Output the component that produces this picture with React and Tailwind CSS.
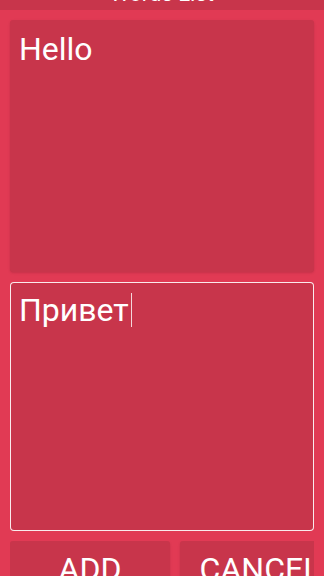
import React from "react";

const font = { fontFamily: "Roboto, 'Noto Sans', sans-serif" };

const App = () => {
  return (
    <div
      className="w-[324px] h-[576px] bg-[#e13a54] overflow-hidden flex flex-col text-white"
      style={font}
    >
      {/* Title bar, scrolled mostly off screen */}
      <div className="h-[10px] shrink-0 bg-[#c8354b] overflow-hidden flex items-end justify-center">
        <span className="text-[22px] leading-[22px] mb-[5px]">Words List</span>
      </div>

      <div className="flex flex-col gap-[10px] px-[10px] pt-[10px]">
        {/* Source word */}
        <div className="h-[252px] bg-[#c8354b] rounded-[3px] shadow-sm px-[9px] pt-[10px]">
          <p className="text-[32px] leading-[38px]">Hello</p>
        </div>

        {/* Translation input */}
        <div className="h-[249px] bg-[#c8354b] rounded-[4px] border-[1.5px] border-white/90 px-[8px] pt-[8px]">
          <p className="text-[32px] leading-[38px] flex items-center">
            Привет
            <span className="inline-block w-[1px] h-[34px] bg-white/80 ml-[2px]" />
          </p>
        </div>

        {/* Buttons */}
        <div className="w-[304px] overflow-hidden">
          <div className="flex gap-[10px] w-[340px]">
            <button className="w-[160px] h-[48px] shrink-0 bg-[#c8354b] rounded-[3px] shadow-sm text-[32px] leading-[36px] pt-[10px] flex justify-center items-start">
              ADD
            </button>
            <button className="w-[160px] h-[48px] shrink-0 bg-[#c8354b] rounded-[3px] shadow-sm text-[32px] leading-[36px] pt-[10px] flex justify-center items-start">
              CANCEL
            </button>
          </div>
        </div>
      </div>
    </div>
  );
};

export default App;
